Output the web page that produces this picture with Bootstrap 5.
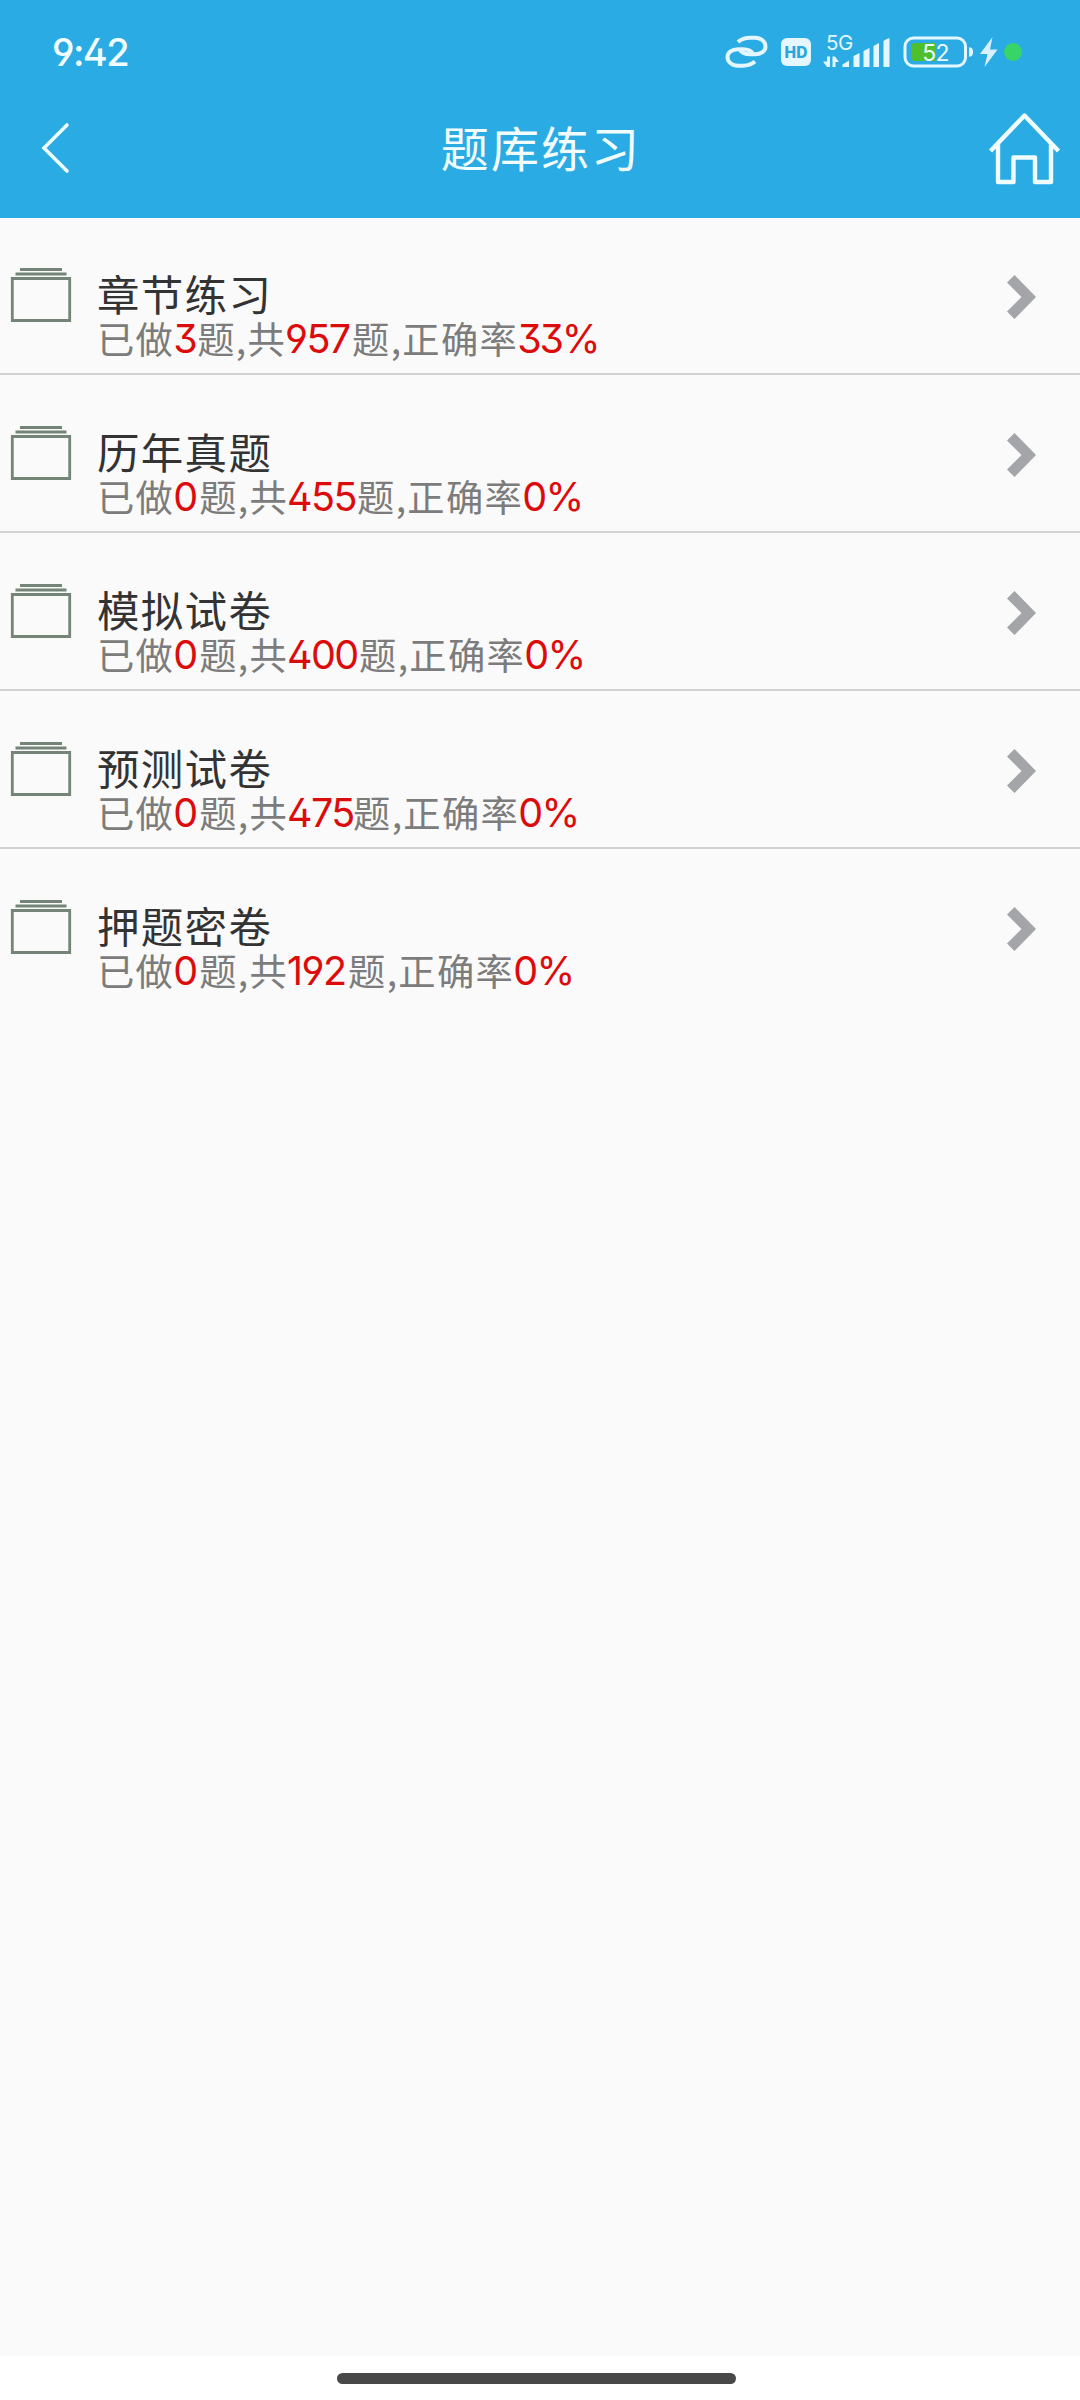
<!DOCTYPE html>
<html lang="zh-CN">
<head>
<meta charset="utf-8">
<meta name="viewport" content="width=device-width, initial-scale=1">
<title>题库练习</title>
<link href="https://cdn.jsdelivr.net/npm/bootstrap@5.3.0/dist/css/bootstrap.min.css" rel="stylesheet">
<style>
body{background:#fafafa;font-family:Inter,"Noto Sans CJK SC",sans-serif;font-feature-settings:"ss01","cv02","cv03","cv04","cv09";}
.screen{height:2400px}
.top-area{background:#2aabe4;height:218px;color:#f2fdff}
.status-bar{height:104px;padding-left:52px}
.clock{font-size:38px;line-height:104px;font-weight:500;letter-spacing:-1.6px}
.app-bar{height:114px;padding:0 18px 0 38px}
.app-title{font-family:"Noto Sans CJK SC",sans-serif;font-size:48px;letter-spacing:2.1px;line-height:84px;height:84px;font-weight:400;margin-right:18px!important}
.entry{height:158px;border-bottom:2px solid #d2d3d3;padding:0 43px 0 9px;background:transparent}
.entry:first-child{height:157px}
.entry:last-child{border-bottom-color:transparent}
.entry-title{font-family:"Noto Sans CJK SC",sans-serif;font-size:42.5px;letter-spacing:1.3px;line-height:44px;color:#333;margin-top:54px}
.entry:first-child .entry-title{margin-top:53px}
.entry-note{font-family:"Noto Sans CJK SC",sans-serif;font-size:37.3px;letter-spacing:1.3px;line-height:44px;padding-top:1px;color:#7c7c7c;white-space:nowrap}
.num{font-family:Inter,"Liberation Sans",sans-serif;font-size:39.5px;letter-spacing:-1.6px;color:#dc0c0c;line-height:44px;padding-top:1px;text-indent:-1px}
.w3{width:23px}.w0{width:25px}.w957{width:66px}.w455{width:69px}.w400{width:71px}.w475{width:65px}.w192{width:60px}.w33p{width:79px;letter-spacing:-2.2px}.w0p{width:58px}
.stack{margin-top:49px;margin-right:24px}
.arrow{margin-top:56px}
.entry:first-child .stack{margin-top:48px}
.entry:first-child .arrow{margin-top:55px}
.gesture{height:44px;background:#fff;padding-top:17px}
.gesture-pill{width:399px;height:11px;border-radius:6px;background:#484848;margin-left:337px}
</style>
</head>
<body>
<svg class="d-none" xmlns="http://www.w3.org/2000/svg">
  <symbol id="stack" viewBox="0 0 64 58"><g fill="none" stroke="#748577" stroke-width="2.8"><path d="M11 3.500H53M6.500 8H57.500M3.300 12.500H60.700V54.500H3.300Z"/></g></symbol>
  <symbol id="arrow" viewBox="0 0 32 48"><path d="M9.500 2 31 24 9.500 46 2 38.500 16.500 24 2 9.500Z" fill="#a4a5a8"/></symbol>
</svg>
<div class="screen d-flex flex-column">
  <header class="top-area">
    <div class="status-bar d-flex justify-content-between">
      <div class="clock">9:42</div>
      <svg width="380" height="104" viewBox="700 0 380 104">
        <g fill="none" stroke="#e4f7ff" stroke-width="4">
          <path d="M738 42C742 38.500 746 37.800 750 37.800H755C761 37.800 765.500 41.500 765.500 46.500C765.500 51 761 54.300 755 54.300H750C745 54.300 741.500 52.800 739.500 49.300"/>
          <path d="M755 61.600C751 65 747 65.700 743 65.700H738C732 65.700 727.500 62 727.500 57C727.500 52.500 732 49.200 738 49.200H743C748 49.200 751.500 50.700 753.500 54.200"/>
        </g>
        <rect x="781" y="38" width="30" height="28" rx="6" fill="#e4f7ff"/>
        <text x="796" y="57.700" text-anchor="middle" font-family="Inter" font-size="15.500" font-weight="800" fill="#2aa5dc">HD</text>
        <text x="826" y="50" font-family="Inter" font-size="20.500" letter-spacing="-.4" fill="#e4f7ff">5G</text>
        <g fill="#e4f7ff">
          <path d="M827 56.500V67L823 61.500H827ZM827 56.500H830V67H827ZM832.500 56.500H835L839 62H835.500V67H832.500Z"/>
          <path d="M842.500 67V64.500L849 60.500V67ZM853.500 67V56L859.500 53V67ZM863.500 67V51L869.500 48V67ZM873.500 67V46L879 43V67ZM883.500 67V41Q886 39 889.500 38V67Z"/>
        </g>
        <rect x="905" y="38" width="60.500" height="28" rx="8.500" fill="none" stroke="#e4f7ff" stroke-width="3"/>
        <path d="M915 43H935.500V61H915Q911 61 911 57V47Q911 43 915 43Z" fill="#4fbf2b"/>
        <path d="M969 47.500H970.500Q973 48 973 52T970.500 56.500H969Z" fill="#e4f7ff"/>
        <text x="935.500" y="60.500" text-anchor="middle" font-family="Inter" font-size="23" letter-spacing="-.8" fill="#e9f9ff">52</text>
        <path d="M992.500 37 980 54H987.500L984.500 67 997.500 49.500H990Z" fill="#d9f1ff"/>
        <circle cx="1013" cy="52" r="9" fill="#37d467"/>
      </svg>
    </div>
    <div class="app-bar d-flex justify-content-between">
      <svg width="84" height="90" viewBox="38 104 84 90"><path d="M67 125 44 148 67 171" fill="none" stroke="#effdff" stroke-width="3.600" stroke-linecap="round"/></svg>
      <h1 class="app-title m-0">题库练习</h1>
      <svg width="84" height="90" viewBox="978 104 84 90"><path d="M990.500 151 1024.500 115.500 1058.500 151M998 144V182H1013.500V157.500H1035V182H1051V144" fill="none" stroke="#effdff" stroke-width="4.400" stroke-linejoin="round"/></svg>
    </div>
  </header>
  <main class="list-group list-group-flush flex-grow-1">
    <a class="entry d-flex align-items-start text-decoration-none"><svg class="stack" width="64" height="58"><use href="#stack"/></svg><div class="flex-grow-1"><div class="entry-title">章节练习</div><div class="entry-note d-flex">已做<span class="num w3">3</span>题,共<span class="num w957">957</span>题,正确率<span class="num w33p">33%</span></div></div><svg class="arrow" width="32" height="48"><use href="#arrow"/></svg></a>
    <a class="entry d-flex align-items-start text-decoration-none"><svg class="stack" width="64" height="58"><use href="#stack"/></svg><div class="flex-grow-1"><div class="entry-title">历年真题</div><div class="entry-note d-flex">已做<span class="num w0">0</span>题,共<span class="num w455">455</span>题,正确率<span class="num w0p">0%</span></div></div><svg class="arrow" width="32" height="48"><use href="#arrow"/></svg></a>
    <a class="entry d-flex align-items-start text-decoration-none"><svg class="stack" width="64" height="58"><use href="#stack"/></svg><div class="flex-grow-1"><div class="entry-title">模拟试卷</div><div class="entry-note d-flex">已做<span class="num w0">0</span>题,共<span class="num w400">400</span>题,正确率<span class="num w0p">0%</span></div></div><svg class="arrow" width="32" height="48"><use href="#arrow"/></svg></a>
    <a class="entry d-flex align-items-start text-decoration-none"><svg class="stack" width="64" height="58"><use href="#stack"/></svg><div class="flex-grow-1"><div class="entry-title">预测试卷</div><div class="entry-note d-flex">已做<span class="num w0">0</span>题,共<span class="num w475">475</span>题,正确率<span class="num w0p">0%</span></div></div><svg class="arrow" width="32" height="48"><use href="#arrow"/></svg></a>
    <a class="entry d-flex align-items-start text-decoration-none"><svg class="stack" width="64" height="58"><use href="#stack"/></svg><div class="flex-grow-1"><div class="entry-title">押题密卷</div><div class="entry-note d-flex">已做<span class="num w0">0</span>题,共<span class="num w192">192</span>题,正确率<span class="num w0p">0%</span></div></div><svg class="arrow" width="32" height="48"><use href="#arrow"/></svg></a>
  </main>
  <footer class="gesture"><div class="gesture-pill"></div></footer>
</div>
<script src="https://cdn.jsdelivr.net/npm/bootstrap@5.3.0/dist/js/bootstrap.bundle.min.js"></script>
</body>
</html>
